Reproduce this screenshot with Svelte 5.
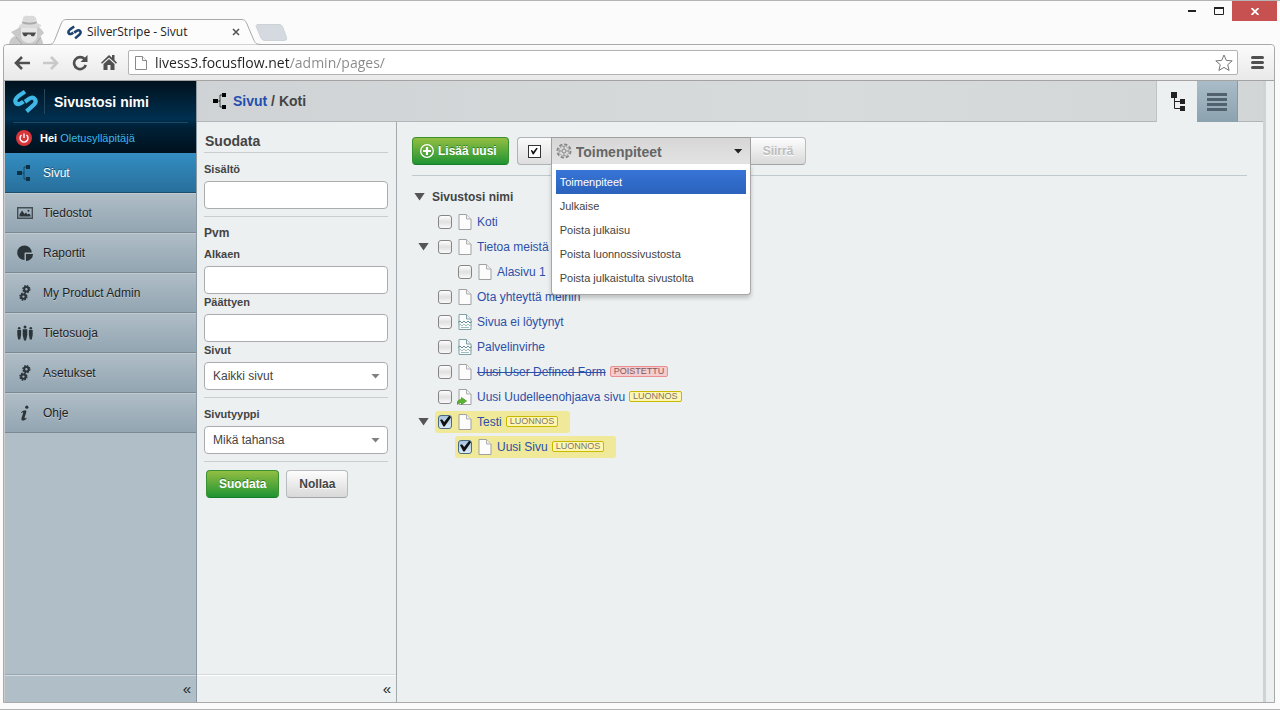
<script lang="ts">
  type IconName = "pages" | "files" | "reports" | "gears" | "people" | "info";

  interface PageNode {
    title: string;
    checked?: boolean;
    kind?: "page" | "error" | "redirect";
    status?: "draft" | "deleted";
    children?: PageNode[];
  }

  const menu: { label: string; icon: IconName }[] = [
    { label: "Sivut", icon: "pages" },
    { label: "Tiedostot", icon: "files" },
    { label: "Raportit", icon: "reports" },
    { label: "My Product Admin", icon: "gears" },
    { label: "Tietosuoja", icon: "people" },
    { label: "Asetukset", icon: "gears" },
    { label: "Ohje", icon: "info" },
  ];

  const actions = [
    "Toimenpiteet",
    "Julkaise",
    "Poista julkaisu",
    "Poista luonnossivustosta",
    "Poista julkaistulta sivustolta",
  ];

  const statusLabels = { draft: "LUONNOS", deleted: "POISTETTU" };

  let pages: PageNode[] = $state([
    { title: "Koti" },
    { title: "Tietoa meistä", children: [{ title: "Alasivu 1" }] },
    { title: "Ota yhteyttä meihin" },
    { title: "Sivua ei löytynyt", kind: "error" },
    { title: "Palvelinvirhe", kind: "error" },
    { title: "Uusi User Defined Form", status: "deleted" },
    { title: "Uusi Uudelleenohjaava sivu", kind: "redirect", status: "draft" },
    {
      title: "Testi",
      checked: true,
      status: "draft",
      children: [{ title: "Uusi Sivu", checked: true, status: "draft" }],
    },
  ]);

  let current = $state("Sivut");
  let action = $state("Toimenpiteet");
  let menuOpen = $state(true);
  let batchMode = $state(true);
  let url = $state("livess3.focusflow.net/admin/pages/");

  function pick(name: string) {
    action = name;
    menuOpen = false;
  }
</script>

{#snippet logo(size: number, colour: string)}
  <svg width={size} height={size} viewBox="0 0 24 24" fill="none" stroke={colour} stroke-width="4" aria-hidden="true">
    <path d="M11.500 2.500L5 7C.5 10.500 2 14.500 5.500 14.500c1.500 0 2.800-1 4.500-2.500" />
    <path d="M11.500 12.200l4-2.800c4.500-3 8.500 2 4.500 5.800l-7 6.300" />
  </svg>
{/snippet}

{#snippet pagesIcon()}
  <svg width="16" height="16" viewBox="0 0 16 16" fill="currentColor" aria-hidden="true">
    <path d="M0 6h5v4H0zM9 0h4v4H9zM9 12h4v4H9z" />
    <path d="M9 2H7v12h2M5 8h2" fill="none" stroke="currentColor" opacity=".7" />
  </svg>
{/snippet}

{#snippet gear(cx: number, cy: number)}
  <circle {cx} {cy} r="2.200" fill="none" stroke="currentColor" stroke-width="2" />
  <circle {cx} {cy} r="3.400" fill="none" stroke="currentColor" stroke-width="1.500" stroke-dasharray="1.600 1.070" />
{/snippet}

{#snippet menuIcon(name: IconName)}
  {#if name === "pages"}
    {@render pagesIcon()}
  {:else}
    <svg width="16" height="16" viewBox="0 0 16 16" fill="currentColor" aria-hidden="true">
      {#if name === "files"}
        <path d="M.7 2.700h14.600v10.600H.7z" fill="none" stroke="currentColor" stroke-width="1.400" opacity=".8" />
        <path d="M2.500 11.500V9.500l2.500-4 2.500 3.500 1.500-1.500 1.500 2 1.500-1 1.500 1.500v1.500z" />
        <circle cx="11.500" cy="5.800" r="1" />
      {:else if name === "reports"}
        <path d="M7.500 8V15A7.300 7.300 0 1 1 14.800 7.500H8z" />
        <path d="M9 9h7a7 7 0 0 1-7 7z" />
      {:else if name === "gears"}
        {@render gear(9.4, 4.2)}
        {@render gear(6.4, 11.6)}
      {:else if name === "people"}
        <circle cx="2.200" cy="3.200" r="1.300" /><circle cx="8" cy="2" r="1.500" /><circle cx="13.800" cy="3.200" r="1.300" />
        <path d="M.3 5h3.800v5l-.9 4.500h-2L.3 10zM5.700 4.300h4.600V10l-1.300 5.500H7L5.700 10zM11.900 5h3.800v5l-.9 4.500h-2l-.9-4.500z" />
      {:else}
        <circle cx="9.800" cy="2.200" r="1.600" />
        <path d="M4 7.200C6 5.500 8.500 4.500 9.300 5.700c.7 1-1.800 6-1.700 7.300.2.900 1 .3 1.700-.3l.4.700c-2 2.300-5 2.900-5.300 1-.2-1.500 1.800-5.500 1.800-6.800 0-.7-.9-.3-1.800.3z" />
      {/if}
    </svg>
  {/if}
{/snippet}

{#snippet pageIcon(kind: string)}
  <svg class="page-icon" width="16" height="16" viewBox="0 0 16 16" fill="none" aria-hidden="true">
    <path d="M2 .5h7.500L14 5v10.500H2z" fill="#fcfcfc" stroke={kind === "error" ? "#7da3a6" : "#a0a0a0"} />
    <path d="M9.500.5V5H14" fill="#eee" stroke={kind === "error" ? "#7da3a6" : "#b0b0b0"} />
    {#if kind === "error"}
      <path d="M1 8.500l2-1.500 2 2 2-2 2 2 2-2 2 2 2-1.500" stroke="#5f9095" />
      <path d="M1 11.500l2-1.500 2 2 2-2 2 2 2-2 2 2 2-1.500M4 13.500h8" stroke="#9dbdbf" />
    {:else if kind === "redirect"}
      <path d="M0 15.500c0-4 2-5 4.500-5V8.500L9.500 12l-5 3.500v-1.800C2.500 13.700 1.500 14 0 15.500z" fill="#5cb531" stroke="#3c8c1a" stroke-width=".7" />
    {/if}
  </svg>
{/snippet}

{#snippet branch(nodes: PageNode[])}
  <ul>
    {#each nodes as node (node.title)}
      <li>
        <div class="row">
          <span class="toggle">
            {#if node.children}<button class="arrow" aria-label="Avaa {node.title}"></button>{/if}
          </span>
          <div class="node" class:selected={node.checked}>
            <input type="checkbox" class="tick" aria-label={node.title} bind:checked={node.checked} />
            {@render pageIcon(node.kind ?? "page")}
            <a href="#edit" class:deleted={node.status === "deleted"}>{node.title}</a>
            {#if node.status}<span class="badge {node.status}">{statusLabels[node.status]}</span>{/if}
          </div>
        </div>
        {#if node.children}{@render branch(node.children)}{/if}
      </li>
    {/each}
  </ul>
{/snippet}

<div class="window">
  <header class="tabstrip">
    <svg width="40" height="29" viewBox="0 0 40 29" aria-hidden="true">
      <path d="M1 29c1-5 3-7 6-8l-4-4 6-3 4-3h17l4 4 2 3-4 4c2 2 3 4 3 7z" fill="#c9c9c9" />
      <path d="M13 13h16v8c0 4-4 7-8 7s-8-3-8-7z" fill="#e6e6e6" />
      <path d="M11 11l3-3 1-5c2-3 4-2 6-2s5-1 7 2l1 5 4 2c1 2-3 3-11 3s-12 0-11-2z" fill="#dadada" />
      <path d="M14 8c4 2 11 2 15 0l-.4-1.500c-4 1.500-10 1.500-14.200 0z" fill="#aaa" />
      <path d="M14 17.500h14l-1.500 3c-1 1.500-3.500 1-4-1h-3c-.5 2-3 2.500-4 1z" fill="#4a4a4a" />
      <path d="M8 22l6 7M33 22l-5 7" stroke="#a8a8a8" />
    </svg>
    <div class="tab">
      <svg class="tab-shape" width="214" height="26" viewBox="0 0 214 26" aria-hidden="true">
        <path d="M0 25.500c4 0 5-1 6.500-4L13 5C14.500 1.500 15.500.5 19 .5h174c3.500 0 4.500 1 6 4.500l7 16.500c1.500 3 3 4 8 4" fill="#fcfcfc" stroke="#a9a9a9" />
      </svg>
      <div class="tab-content">
        {@render logo(15, "#1c4270")}
        <span>SilverStripe - Sivut</span>
        <button class="tab-close" aria-label="Sulje välilehti">
          <svg width="8" height="8" viewBox="0 0 8 8" stroke="#555" stroke-width="1.600"><path d="M1 1l6 6M7 1L1 7" /></svg>
        </button>
      </div>
    </div>
    <button class="new-tab" aria-label="Uusi välilehti">
      <svg width="32" height="17" viewBox="0 0 32 17"><path d="M1 2Q1 .5 3 .5h21q2.500 0 3.500 2l4 11q1 3-2 3H10q-3 0-4-2.500z" fill="#d5dae0" stroke="#cdd2d6" /></svg>
    </button>
    <div class="window-controls">
      <button aria-label="Pienennä"><svg width="8" height="3"><path d="M0 0h8v2H0z" fill="#222" /></svg></button>
      <button aria-label="Suurenna"><svg width="10" height="8"><path d="M.5 1h9v6.500h-9z" fill="none" stroke="#222" /><path d="M0 0h10v2H0z" fill="#222" /></svg></button>
      <button class="close" aria-label="Sulje"><svg width="8" height="7" viewBox="0 0 8 7" stroke="#fff" stroke-width="1.800"><path d="M.5 0l7 7M7.500 0l-7 7" /></svg></button>
    </div>
  </header>

  <div class="frame">
    <div class="toolbar">
      <button aria-label="Takaisin">
        <svg width="16" height="14" viewBox="0 0 16 14" fill="none" stroke="#4f4f4f" stroke-width="2.600"><path d="M8 1L2 7l6 6M2 7h14" /></svg>
      </button>
      <button aria-label="Eteenpäin">
        <svg width="16" height="14" viewBox="0 0 16 14" fill="none" stroke="#c8c8c8" stroke-width="2.600"><path d="M8 1l6 6-6 6M14 7H0" /></svg>
      </button>
      <button aria-label="Päivitä">
        <svg width="16" height="16" viewBox="0 0 16 16" fill="none" stroke="#4f4f4f" stroke-width="2.600"><path d="M12.500 4A6 6 0 1 0 13.800 10" /><path d="M15.500 0v7H8.500z" fill="#4f4f4f" stroke="none" /></svg>
      </button>
      <button aria-label="Koti">
        <svg width="16" height="15" viewBox="0 0 16 15" fill="#4f4f4f"><path d="M8 0l3 2.800V0h2.500v5L16 7.800l-1 1L8 2.500 1 8.800l-1-1zM8 4l5.500 5v6H9.500v-5h-3v5h-4V9z" /></svg>
      </button>
      <label class="omnibox">
        <svg width="12" height="14" viewBox="0 0 12 14" fill="#fff" stroke="#888"><path d="M.5.500h7l4 4v9H.5z" /><path d="M7.500.500v4h4" /></svg>
        <input type="text" aria-label="Osoite" bind:value={url} />
        <svg width="18" height="18" viewBox="0 0 18 18" fill="#fff" stroke="#777"><path d="M9 1l2.300 5.400 5.900.5-4.500 3.800 1.400 5.800L9 13.400l-5.100 3.100 1.400-5.800L.8 6.900l5.900-.5z" /></svg>
      </label>
      <button aria-label="Valikko">
        <svg width="13" height="13" viewBox="0 0 13 13"><path d="M1.500 1.500h10M1.500 6.500h10M1.500 11.500h10" stroke="#4f4f4f" stroke-width="3" stroke-linecap="round" /></svg>
      </button>
    </div>

    <div class="cms">
      <aside class="sidebar">
        <div class="branding">
          <a class="brand" href="#site">
            <span class="brand-logo">{@render logo(25, "#3fb8e8")}</span>
            <span>Sivustosi nimi</span>
          </a>
          <div class="user">
            <button aria-label="Kirjaudu ulos">
              <svg width="16" height="16" viewBox="0 0 16 16" fill="none" stroke="#fff" stroke-width="1.400"><circle cx="8" cy="8" r="8" fill="#d8343a" stroke="none" /><path d="M8 3.500v4.500M5.500 5a4 4 0 1 0 5 0" /></svg>
            </button>
            <span><b>Hei</b> <a href="#profile">Oletusylläpitäjä</a></span>
          </div>
        </div>
        <nav>
          {#each menu as item (item.label)}
            <a href="#{item.icon}" class:active={current === item.label} onclick={() => (current = item.label)}>
              {@render menuIcon(item.icon)}
              <span>{item.label}</span>
            </a>
          {/each}
        </nav>
        <footer><button aria-label="Pienennä valikko">«</button></footer>
      </aside>

      <div class="main">
        <div class="heading">
          <h1>{@render pagesIcon()}<span><a href="#pages">Sivut</a> / Koti</span></h1>
          <div class="views">
            <button class="view active" aria-label="Puunäkymä">
              <svg width="15" height="20" viewBox="0 0 15 20" fill="#222"><path d="M1 0h6v6H1zM10 7h5v5h-5zM10 14h5v5h-5z" /><path d="M4.500 6v10.500H10M4.500 9.500H10" fill="none" stroke="#222" /></svg>
            </button>
            <button class="view" aria-label="Luettelonäkymä">
              <svg width="20" height="18" viewBox="0 0 20 18"><path d="M0 1.500h20M0 6.500h20M0 11.500h20M0 16.500h20" stroke="#51626e" stroke-width="3" /></svg>
            </button>
          </div>
        </div>

        <div class="columns">
          <form class="filter" onsubmit={(e) => e.preventDefault()}>
            <h2>Suodata</h2>
            <div class="group">
              <label for="term">Sisältö</label>
              <input id="term" type="text" />
            </div>
            <div class="group">
              <h3>Pvm</h3>
              <label for="from">Alkaen</label>
              <input id="from" type="text" />
              <label for="to">Päättyen</label>
              <input id="to" type="text" />
              <label for="status">Sivut</label>
              <span class="select">
                <select id="status"><option>Kaikki sivut</option></select>
              </span>
            </div>
            <div class="group">
              <label for="type">Sivutyyppi</label>
              <span class="select">
                <select id="type"><option>Mikä tahansa</option></select>
              </span>
            </div>
            <div class="buttons">
              <button type="submit" class="btn green">Suodata</button>
              <button type="reset" class="btn">Nollaa</button>
            </div>
            <footer><button type="button" aria-label="Pienennä suodatin">«</button></footer>
          </form>

          <section class="content">
            <div class="actions">
              <button class="btn green add">
                <svg width="14" height="14" viewBox="0 0 14 14" fill="none" stroke="#fff"><circle cx="7" cy="7" r="6.300" stroke-width="1.300" /><path d="M7 3v8M3 7h8" stroke-width="2.200" /></svg>
                Lisää uusi
              </button>
              <div class="batch">
                <label class="batch-toggle">
                  <input type="checkbox" aria-label="Monivalinta" bind:checked={batchMode} />
                </label>
                <div class="batch-select">
                  <svg class="cog" width="16" height="16" viewBox="0 0 16 16" fill="none" stroke="#858585" aria-hidden="true">
                    <circle cx="8" cy="8" r="6.600" stroke-width="1.800" stroke-dasharray="3.300 1.880" />
                    <circle cx="8" cy="8" r="5" stroke="#aaa" /><circle cx="8" cy="8" r="2" />
                    <path d="M8 3v2.500M8 10.500V13M3 8h2.500M10.500 8H13" />
                  </svg>
                  <select aria-label="Toiminto" bind:value={action}>
                    {#each actions as name (name)}<option>{name}</option>{/each}
                  </select>
                  {#if menuOpen}
                    <div class="dropdown">
                      {#each actions as name (name)}
                        <button class:highlighted={name === action} onclick={() => pick(name)}>{name}</button>
                      {/each}
                    </div>
                  {/if}
                </div>
                <button class="btn go" disabled>Siirrä</button>
              </div>
            </div>
            <div class="tree">
              <div class="row root">
                <button class="arrow" aria-label="Avaa sivusto"></button>
                <strong>Sivustosi nimi</strong>
              </div>
              {@render branch(pages)}
            </div>
          </section>
        </div>
      </div>
      <div class="gutter"></div>
    </div>
  </div>
</div>

<style>
  :global(body) {
    margin: 0;
  }
  * {
    box-sizing: border-box;
  }
  button,
  input,
  select {
    font: inherit;
    color: inherit;
  }
  button {
    border: 0;
    padding: 0;
    background: none;
  }
  svg {
    display: block;
    flex: none;
  }
  a {
    text-decoration: none;
  }

  .window {
    display: flex;
    flex-direction: column;
    min-height: 100vh;
    padding: 0 5px 6px 3px;
    border-top: 1px solid #b4b4b4;
    border-bottom: 1px solid #b4b4b4;
    background: #fbfbfb;
    color: #444;
    font: 12px/16px "Liberation Sans", Arial, sans-serif;
  }

  /* browser chrome */
  .tabstrip {
    display: flex;
    align-items: flex-end;
    height: 43px;
    margin-right: -2px;
    padding-left: 5px;
  }
  .tab {
    display: grid;
    margin-bottom: -1px;
    z-index: 1;
  }
  .tab-shape,
  .tab-content {
    grid-area: 1 / 1;
  }
  .tab-content {
    display: flex;
    align-items: center;
    gap: 5px;
    padding: 0 22px 0 19px;
    color: #222;
    font: 12px/16px "Open Sans", sans-serif;
  }
  .tab-close {
    margin-left: auto;
  }
  .new-tab {
    margin: 0 0 3px -7px;
  }
  .window-controls {
    display: flex;
    align-self: flex-start;
    margin-left: auto;
  }
  .window-controls button {
    display: grid;
    place-items: center;
    width: 27px;
    height: 20px;
  }
  .window-controls button.close {
    width: 45px;
    background: #c75050;
  }
  .frame {
    display: flex;
    flex: 1;
    flex-direction: column;
    border: 1px solid #a9a9a9;
    border-radius: 4px 4px 0 0;
  }
  .toolbar {
    display: flex;
    align-items: center;
    gap: 13px;
    height: 36px;
    padding: 0 10px;
    border-bottom: 1px solid #a3a3a3;
    border-radius: 4px 4px 0 0;
    background: linear-gradient(#fbfbfb, #e9e9e9);
  }
  .omnibox {
    display: flex;
    flex: 1;
    align-items: center;
    gap: 8px;
    height: 25px;
    margin-left: -2px;
    padding: 0 4px 0 6px;
    border: 1px solid #b2b2b2;
    border-radius: 2px;
    background: #fff;
  }
  /* host name dark, path grey */
  .omnibox input {
    flex: 1;
    min-width: 0;
    padding: 0;
    border: 0;
    outline: 0;
    background: linear-gradient(90deg, #222 134px, #888 134px);
    background-clip: text;
    color: transparent;
    font: 14px/20px "Open Sans", sans-serif;
  }

  .cms {
    display: flex;
    flex: 1;
    background: #edf0f1;
  }
  .gutter {
    width: 11px;
    border-left: 3px solid #cfd3d4;
  }

  /* left menu */
  .sidebar {
    display: flex;
    flex-direction: column;
    width: 193px;
    border-left: 1px solid #ccc;
    border-right: 1px solid #8d9aa2;
    background: #b0bec7;
  }
  .branding {
    padding: 0 8px;
    background: linear-gradient(#00111d, #003050 38px, #002137 46px, #00111d);
    color: #fff;
  }
  .brand {
    display: flex;
    align-items: center;
    gap: 9px;
    height: 42px;
    border-bottom: 1px solid #1a4763;
    color: #fff;
    font-weight: bold;
    font-size: 14px;
  }
  .brand-logo {
    padding-right: 6px;
    border-right: 1px solid #27455a;
  }
  .user {
    display: flex;
    align-items: center;
    gap: 8px;
    height: 30px;
    padding-left: 3px;
    font-size: 11px;
  }
  .user a {
    color: #3eb5e8;
  }
  nav a {
    display: flex;
    align-items: center;
    gap: 10px;
    height: 40px;
    padding-left: 12px;
    border-top: 1px solid #bfcad1;
    border-bottom: 1px solid #7d8990;
    background: linear-gradient(#afbdc6, #92a5b2);
    color: #1f1f1f;
    text-shadow: 0 1px 0 #bfcad1;
  }
  nav svg {
    color: #2b3439;
  }
  nav a.active {
    border-top-color: #3a8cc0;
    border-bottom-color: #1d4e6c;
    background: linear-gradient(#338dc1, #286f9b);
    color: #fff;
    text-shadow: 0 -1px 0 #1d4e6c;
  }
  nav a.active svg {
    color: #0c3147;
  }
  footer {
    display: flex;
    justify-content: flex-end;
    height: 28px;
    margin-top: auto;
    padding-right: 5px;
    border-top: 1px solid #98a6af;
    box-shadow: inset 0 1px 0 #d3dce1;
    color: #222;
    font-size: 15px;
  }

  .main {
    display: flex;
    flex: 1;
    flex-direction: column;
    min-width: 0;
  }
  .heading {
    display: flex;
    justify-content: space-between;
    height: 41px;
    padding: 0 25px 0 16px;
    border-bottom: 1px solid #b3b6b8;
    background: linear-gradient(90deg, #d0d3d5, #d8dbdc 60%, #d3d6d7);
  }
  h1 {
    display: flex;
    align-items: center;
    gap: 4px;
    margin: 0;
    font-size: 14px;
  }
  h1 svg {
    color: #000;
  }
  h1 a {
    color: #1f4fb0;
  }
  .views {
    display: flex;
    margin-bottom: -1px;
  }
  .view {
    display: grid;
    place-items: center;
    width: 41px;
    background: linear-gradient(#a9bcc8, #8ca2af);
    border-right: 1px solid #8c999f;
  }
  .view.active {
    border: 0;
    background: #edf0f1;
    border-left: 1px solid #c0c3c5;
  }
  .columns {
    display: flex;
    flex: 1;
  }

  /* filter panel */
  .filter {
    display: flex;
    flex-direction: column;
    width: 200px;
    border-right: 1px solid #a3a9ad;
    padding-left: 7px;
  }
  .filter > * {
    margin-right: 8px;
  }
  h2 {
    margin: 0;
    padding: 11px 1px 2px;
    border-bottom: 1px solid #c8cdd0;
    font-size: 14px;
    line-height: 17px;
  }
  h3 {
    margin: 0 0 5px;
    font-size: 12px;
  }
  .group {
    display: flex;
    flex-direction: column;
    padding: 8px 0 7px;
    border-bottom: 1px solid #c8cdd0;
  }
  .group label {
    margin-bottom: 4px;
    font-weight: bold;
    font-size: 11px;
  }
  .group input,
  .group select {
    width: 100%;
    height: 28px;
    padding: 0 8px;
    border: 1px solid #aaacae;
    border-radius: 4px;
    background: #fff;
  }
  .select,
  .batch-select {
    display: grid;
    grid-template-columns: minmax(0, 1fr);
  }
  .select select,
  .batch-select select {
    grid-area: 1 / 1;
    appearance: none;
  }
  .select::after,
  .batch-select::after {
    content: "";
    grid-area: 1 / 1;
    align-self: center;
    justify-self: end;
    width: 9px;
    height: 5px;
    margin-right: 8px;
    background: #808080;
    clip-path: polygon(0 0, 100% 0, 50% 100%);
    pointer-events: none;
  }
  .buttons {
    display: flex;
    gap: 7px;
    padding: 8px 2px;
  }
  .filter footer {
    margin-right: 0;
    margin-left: -7px;
    border-top-color: #d5dadc;
    box-shadow: inset 0 1px 0 #fff;
  }
  .btn {
    height: 28px;
    padding: 0 12px;
    border: 1px solid #b9bcbe;
    border-bottom-color: #a2a5a7;
    border-radius: 4px;
    background: linear-gradient(#fdfdfd, #d9d9d9);
    font-weight: bold;
    text-shadow: 0 1px 0 #fff;
  }
  .btn.green {
    border-color: #3a9130;
    border-bottom-color: #167c28;
    background: linear-gradient(#93be42, #1f9433);
    color: #fff;
    text-shadow: 0 -1px 0 #2f7d27;
  }

  /* page tree */
  .content {
    flex: 1;
    padding: 15px 16px 0 15px;
  }
  .actions {
    display: flex;
    gap: 8px;
    padding-bottom: 10px;
    border-bottom: 1px solid #bfc9cf;
  }
  .btn.add {
    display: flex;
    align-items: center;
    gap: 4px;
    padding: 0 11px 0 7px;
  }
  .batch {
    display: flex;
  }
  .batch-toggle {
    display: grid;
    place-items: center;
    width: 34px;
    border: 1px solid #b0b3b5;
    border-right: 0;
    border-radius: 4px 0 0 4px;
    background: linear-gradient(#fafafa, #dedede);
  }
  .batch-toggle input,
  .tick {
    appearance: none;
    display: grid;
    width: 14px;
    height: 14px;
    margin: 0;
    border: 1px solid #858585;
    border-radius: 3px;
    background: linear-gradient(#fff, #e0e0e0 50%, #fafafa);
  }
  .batch-toggle input {
    width: 13px;
    height: 13px;
    border-color: #333;
    border-radius: 0;
    background: #fff;
  }
  .batch-toggle input:checked::after,
  .tick:checked::after {
    content: "";
    margin: 2px;
    background: #111;
    clip-path: polygon(0 40%, 18% 35%, 38% 60%, 85% 0, 100% 15%, 42% 100%, 30% 100%);
  }
  .tick:checked {
    border-color: #4d6a83;
    background: linear-gradient(#a5c4de, #dcecf8);
  }
  .tick:checked::after {
    margin: 0 0 1px 1px;
  }
  .batch-select {
    position: relative;
    width: 200px;
  }
  .batch-select select {
    padding: 1px 24px 0 24px;
    border: 1px solid #a0a0a0;
    border-bottom: 0;
    border-radius: 0;
    background: linear-gradient(#d6d6d6, #e4e4e4);
    color: #666;
    font-weight: bold;
    font-size: 14px;
  }
  .batch-select::after {
    background: #222;
  }
  .cog {
    grid-area: 1 / 1;
    align-self: center;
    margin-left: 5px;
    z-index: 1;
    pointer-events: none;
  }
  .btn.go {
    border-left: 0;
    border-radius: 0 4px 4px 0;
    color: #bdbdbd;
  }
  .dropdown {
    position: absolute;
    top: 100%;
    left: 0;
    z-index: 2;
    display: flex;
    flex-direction: column;
    width: 100%;
    margin-top: -1px;
    padding: 6px 4px 4px;
    border: 1px solid #a8a8a8;
    border-top: 0;
    border-radius: 0 0 4px 4px;
    background: #fff;
    box-shadow: 0 3px 4px rgba(0, 0, 0, 0.2);
  }
  .dropdown button {
    height: 24px;
    padding: 0 4px;
    font-size: 11px;
    text-align: left;
  }
  .dropdown .highlighted {
    background: linear-gradient(#3875d7, #2a62bc);
    color: #fff;
  }
  .tree {
    padding-top: 8px;
  }
  ul {
    margin: 0;
    padding: 0;
    list-style: none;
  }
  li ul {
    padding-left: 20px;
  }
  .row {
    display: flex;
    align-items: center;
    height: 25px;
  }
  .root {
    gap: 7px;
    padding-left: 2px;
  }
  .toggle {
    width: 23px;
    padding-left: 6px;
  }
  .arrow {
    display: block;
    width: 11px;
    height: 8px;
    background: #555;
    clip-path: polygon(0 0, 100% 0, 50% 100%);
  }
  .node {
    display: flex;
    align-items: center;
    height: 22px;
    padding: 0 12px 0 3px;
    border-radius: 3px;
  }
  .node.selected {
    background: #efe999;
  }
  .page-icon {
    margin: 0 4px 0 5px;
  }
  .node a {
    color: #2c4fa8;
  }
  .node a.deleted {
    text-decoration: line-through;
  }
  .badge {
    margin-left: 4px;
    padding: 0 3px;
    border: 1px solid #c9b800;
    border-radius: 2px;
    background: #fff6b0;
    color: #7e7470;
    font-size: 9px;
    line-height: 9px;
  }
  .badge.deleted {
    border-color: #e98f92;
    background: #f5cccd;
    color: #7c5a5c;
  }
</style>
